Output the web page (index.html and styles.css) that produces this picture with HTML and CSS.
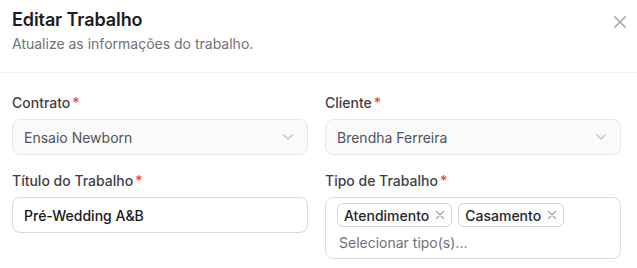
FILE: index.html
```html
<!DOCTYPE html>
<html lang="pt-BR">
<head>
<meta charset="utf-8">
<title>Editar Trabalho</title>
<link rel="stylesheet" href="styles.css">
</head>
<body>
<div class="dialog">
  <div class="header">
    <h2 class="title">Editar Trabalho</h2>
    <p class="subtitle">Atualize as informações do trabalho.</p>
    <button class="close" aria-label="Fechar">
      <svg width="12" height="12" viewBox="0 0 12 12" fill="none" stroke="currentColor" stroke-width="1.4" stroke-linecap="round"><path d="M0.7 0.7L11.3 11.3M11.3 0.7L0.7 11.3"/></svg>
    </button>
  </div>
  <div class="body">
    <div class="field">
      <label class="label">Contrato<span class="req">*</span></label>
      <div class="select">
        <span class="value">Ensaio Newborn</span>
        <svg class="chev" width="16" height="16" viewBox="0 0 24 24" fill="none" stroke="currentColor" stroke-width="2" stroke-linecap="round" stroke-linejoin="round"><path d="m6 9 6 6 6-6"/></svg>
      </div>
    </div>
    <div class="field">
      <label class="label">Cliente<span class="req">*</span></label>
      <div class="select">
        <span class="value">Brendha Ferreira</span>
        <svg class="chev" width="16" height="16" viewBox="0 0 24 24" fill="none" stroke="currentColor" stroke-width="2" stroke-linecap="round" stroke-linejoin="round"><path d="m6 9 6 6 6-6"/></svg>
      </div>
    </div>
    <div class="field">
      <label class="label">Título do Trabalho<span class="req">*</span></label>
      <div class="input">Pré-Wedding A&amp;B</div>
    </div>
    <div class="field">
      <label class="label">Tipo de Trabalho<span class="req">*</span></label>
      <div class="multi">
        <div class="chips">
          <span class="chip">Atendimento<svg class="chip-x" width="10" height="10" viewBox="0 0 10 10" fill="none" stroke="currentColor" stroke-width="1.2" stroke-linecap="round"><path d="M1.5 1.5L8.5 8.5M8.5 1.5L1.5 8.5"/></svg></span>
          <span class="chip">Casamento<svg class="chip-x" width="10" height="10" viewBox="0 0 10 10" fill="none" stroke="currentColor" stroke-width="1.2" stroke-linecap="round"><path d="M1.5 1.5L8.5 8.5M8.5 1.5L1.5 8.5"/></svg></span>
        </div>
        <div class="placeholder">Selecionar tipo(s)...</div>
      </div>
    </div>
  </div>
</div>
</body>
</html>
```

FILE: styles.css
```css
* { box-sizing: border-box; }
html, body { margin: 0; padding: 0; background: #ffffff; }
body {
  font-family: Inter, "Noto Sans", sans-serif;
  color: #18181b;
  width: 637px;
  height: 268px;
  overflow: hidden;
}
.dialog { position: relative; }
.header {
  position: relative;
  padding: 6px 12px 18px 12px;
  border-bottom: 1px solid #f0f0f2;
}
.title {
  margin: 0;
  font-size: 18px;
  line-height: 28px;
  font-weight: 600;
  color: #1c1c22;
  letter-spacing: -0.1px;
}
.subtitle {
  margin: 0;
  font-size: 14px;
  line-height: 20px;
  color: #71717a;
}
.close {
  position: absolute;
  left: 614px;
  top: 16px;
  width: 12px;
  height: 12px;
  padding: 0;
  border: 0;
  background: none;
  color: #a1a1aa;
  display: flex;
}
.body {
  display: grid;
  grid-template-columns: 296px 296px;
  column-gap: 17px;
  row-gap: 16px;
  padding: 20px 16px 0 12px;
}
.field { display: flex; flex-direction: column; gap: 6px; }
.label {
  font-size: 14px;
  line-height: 20px;
  font-weight: 500;
  color: #3f3f46;
}
.req { color: #ef4444; margin-left: 2px; }
.select {
  height: 36px;
  border: 1px solid #e8e8eb;
  border-radius: 8px;
  background: #fafafa;
  display: flex;
  align-items: center;
  justify-content: space-between;
  padding: 0 11px 0 11px;
  font-size: 14px;
  color: #52525b;
}
.chev { color: #c4c4ca; }
.input {
  height: 36px;
  border: 1px solid #dcdce0;
  border-radius: 8px;
  background: #fff;
  display: flex;
  align-items: center;
  padding: 0 11px;
  font-size: 14px;
  color: #18181b;
  font-weight: 500;
}
.multi {
  border: 1px solid #dcdce0;
  border-radius: 8px;
  padding: 5px 12px 5px 11px;
  display: flex;
  flex-direction: column;
  gap: 6px;
}
.chips { display: flex; gap: 6px; }
.chip {
  height: 24px;
  display: inline-flex;
  align-items: center;
  border: 1px solid #d4d4d8;
  border-radius: 6px;
  padding: 0 6px 0 6px;
  font-size: 14px;
  font-weight: 500;
  color: #27272a;
}
.chip-x { margin-left: 6px; color: #a1a1aa; }
.placeholder {
  font-size: 14px;
  line-height: 20px;
  color: #71717a;
  padding-left: 2px;
}
```
